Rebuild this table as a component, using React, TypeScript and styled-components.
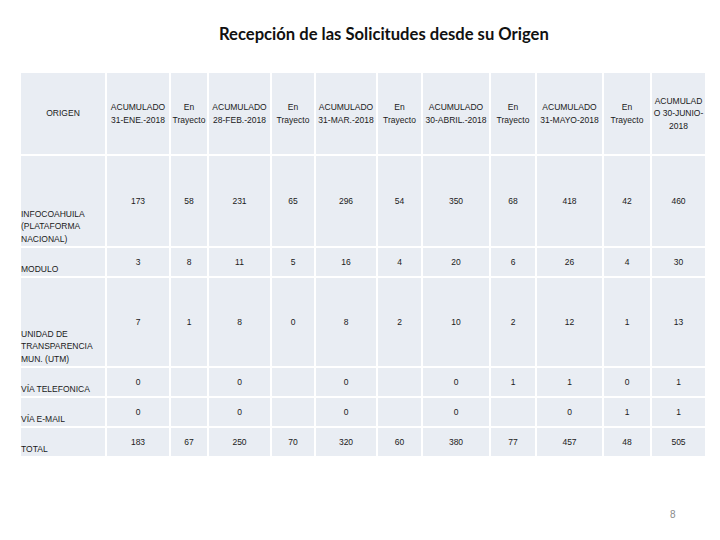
import React from "react";
import styled, { createGlobalStyle } from "styled-components";

const Global = createGlobalStyle`
  html, body { margin: 0; padding: 0; background: #ffffff; }
  body { font-family: "Liberation Sans", Arial, sans-serif; }
`;

const Page = styled.div`
  width: 720px;
  height: 540px;
  background: #ffffff;
  display: flex;
  flex-direction: column;
  position: relative;
  overflow: hidden;
`;

const Title = styled.h1`
  margin: 0;
  padding: 25px 0 0 219px;
  font-family: Lato, "Liberation Sans", Arial, sans-serif;
  font-weight: 700;
  font-size: 16.6px;
  line-height: 19px;
  color: #111111;
  white-space: nowrap;
`;

const Table = styled.div`
  margin: 29px 0 0 21px;
  display: grid;
  grid-template-columns: 84px 62px 36px 61px 42px 60px 43px 66px 44px 65px 46px 53px;
  grid-template-rows: 81px 90px 28px 88px 28px 28px 28px;
  gap: 2px;
  width: 684px;
`;

const Cell = styled.div<{ $kind: "head" | "label" | "num" }>`
  background: #e9edf3;
  font-family: "Liberation Sans", Arial, sans-serif;
  font-size: 8.5px;
  line-height: 12.5px;
  color: #1a1a1a;
  display: flex;
  flex-direction: column;
  justify-content: ${(p) => (p.$kind === "label" ? "flex-end" : "center")};
  align-items: ${(p) => (p.$kind === "label" ? "flex-start" : "center")};
  text-align: ${(p) => (p.$kind === "label" ? "left" : "center")};
  white-space: nowrap;
  padding-bottom: ${(p) => (p.$kind === "label" ? "1px" : "0")};
`;

const PageNum = styled.div`
  position: absolute;
  left: 670px;
  top: 509px;
  font-family: "Liberation Sans", Arial, sans-serif;
  font-size: 10px;
  color: #8a8a8a;
`;

const headers: string[][] = [
  ["ORIGEN"],
  ["ACUMULADO", "31-ENE.-2018"],
  ["En", "Trayecto"],
  ["ACUMULADO", "28-FEB.-2018"],
  ["En", "Trayecto"],
  ["ACUMULADO", "31-MAR.-2018"],
  ["En", "Trayecto"],
  ["ACUMULADO", "30-ABRIL.-2018"],
  ["En", "Trayecto"],
  ["ACUMULADO", "31-MAYO-2018"],
  ["En", "Trayecto"],
  ["ACUMULAD", "O 30-JUNIO-", "2018"],
];

const rows: { label: string[]; values: string[] }[] = [
  {
    label: ["INFOCOAHUILA", "(PLATAFORMA", "NACIONAL)"],
    values: ["173", "58", "231", "65", "296", "54", "350", "68", "418", "42", "460"],
  },
  {
    label: ["MODULO"],
    values: ["3", "8", "11", "5", "16", "4", "20", "6", "26", "4", "30"],
  },
  {
    label: ["UNIDAD DE", "TRANSPARENCIA", "MUN. (UTM)"],
    values: ["7", "1", "8", "0", "8", "2", "10", "2", "12", "1", "13"],
  },
  {
    label: ["VÍA TELEFONICA"],
    values: ["0", "", "0", "", "0", "", "0", "1", "1", "0", "1"],
  },
  {
    label: ["VÍA E-MAIL"],
    values: ["0", "", "0", "", "0", "", "0", "", "0", "1", "1"],
  },
  {
    label: ["TOTAL"],
    values: ["183", "67", "250", "70", "320", "60", "380", "77", "457", "48", "505"],
  },
];

const Lines = ({ lines }: { lines: string[] }) => (
  <>
    {lines.map((l, i) => (
      <span key={i}>{l}</span>
    ))}
  </>
);

export default function App() {
  return (
    <Page>
      <Global />
      <Title>Recepción de las Solicitudes desde su Origen</Title>
      <Table>
        {headers.map((h, i) => (
          <Cell key={"h" + i} $kind="head">
            <Lines lines={h} />
          </Cell>
        ))}
        {rows.map((r, ri) => (
          <React.Fragment key={"r" + ri}>
            <Cell $kind="label">
              <Lines lines={r.label} />
            </Cell>
            {r.values.map((v, vi) => (
              <Cell key={vi} $kind="num">
                {v}
              </Cell>
            ))}
          </React.Fragment>
        ))}
      </Table>
      <PageNum>8</PageNum>
    </Page>
  );
}
